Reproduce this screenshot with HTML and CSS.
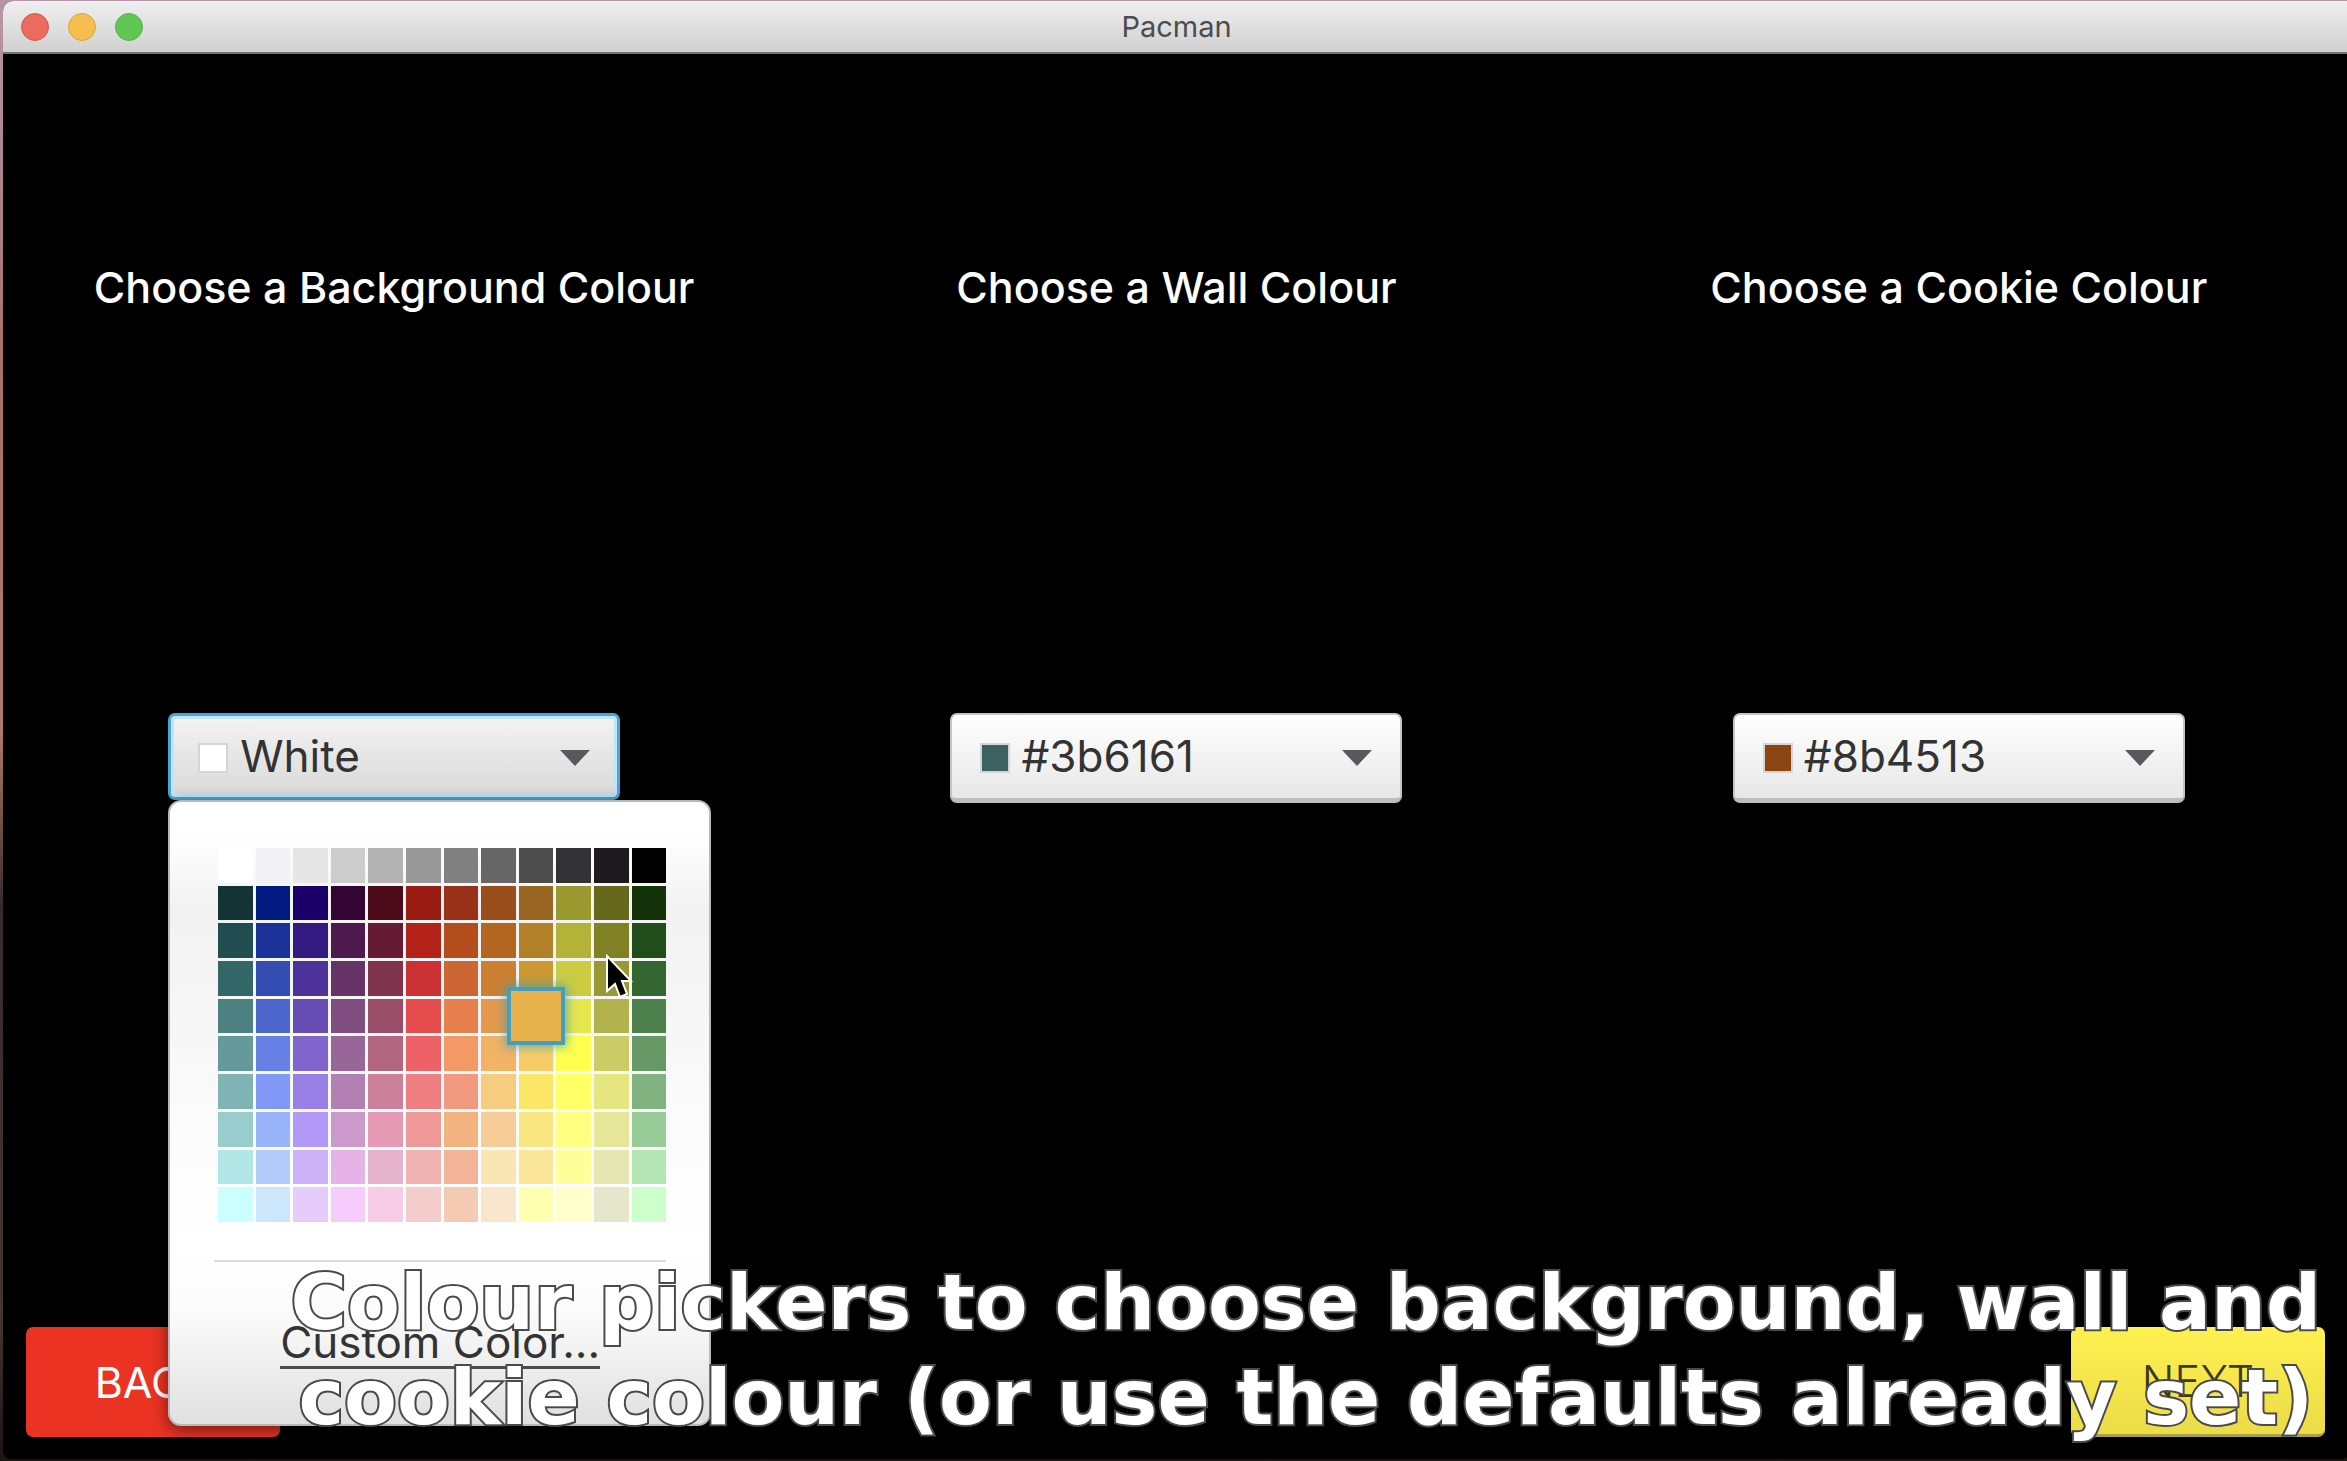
FILE: index.html
```html
<!DOCTYPE html>
<html lang="en">
<head>
<meta charset="utf-8">
<title>Pacman</title>
<link rel="stylesheet" href="styles.css">
</head>
<body>
<div class="window">
  <header class="titlebar">
    <div class="lights">
      <button class="light light-close" aria-label="Close"></button>
      <button class="light light-min" aria-label="Minimise"></button>
      <button class="light light-zoom" aria-label="Zoom"></button>
    </div>
    <h1 class="title">Pacman</h1>
  </header>
  <main class="board">
    <label class="heading" for="background">Choose a Background Colour</label>
    <label class="heading" for="wall">Choose a Wall Colour</label>
    <label class="heading" for="cookie">Choose a Cookie Colour</label>

    <div class="picker picker-open">
      <select id="background"><option>White</option></select>
      <span class="chip chip-white"></span>
      <svg class="arrow" viewBox="0 0 30 16"><path d="M0 0H30L15 16Z"/></svg>
      <div class="popup">
        <div class="palette" id="palette"></div>
        <hr class="rule">
        <a class="custom" href="#">Custom Color...</a>
        <svg class="cursor" viewBox="0 0 28 46"><path d="M2 2V37L10 30L15 43L22 40L17 27H26Z"/></svg>
      </div>
    </div>
    <div class="picker">
      <select id="wall"><option>#3b6161</option></select>
      <span class="chip chip-wall"></span>
      <svg class="arrow" viewBox="0 0 30 16"><path d="M0 0H30L15 16Z"/></svg>
    </div>
    <div class="picker">
      <select id="cookie"><option>#8b4513</option></select>
      <span class="chip chip-cookie"></span>
      <svg class="arrow" viewBox="0 0 30 16"><path d="M0 0H30L15 16Z"/></svg>
    </div>

    <nav class="actions">
      <button class="action back">BACK</button>
      <button class="action next">NEXT</button>
    </nav>
  </main>
</div>
<p class="caption">Colour pickers to choose background, wall and<br>cookie colour (or use the defaults already set)</p>
<script src="palette.js"></script>
</body>
</html>
```
FILE: styles.css
```css
* { box-sizing: border-box; }

body {
  margin: 0;
  min-height: 100vh;
  padding: 1px 0 2px 3px;
  background: linear-gradient(#b795a8, #a8706c 25%, #b07a68 50%, #3a2a2c 62%, #4a3430 90%, #1c1512);
  font-family: Inter, "Liberation Sans", sans-serif;
  overflow: hidden;
}

.window {
  display: flex;
  flex-direction: column;
  min-height: calc(100vh - 3px);
  margin-right: -3px;
  border-radius: 10px 10px 8px 8px;
  background: #000;
}

.titlebar {
  display: grid;
  grid-template-columns: 1fr auto 1fr;
  align-items: center;
  height: 53px;
  padding: 0 18px;
  border-bottom: 2px solid #6f7272;
  border-radius: 10px 0 0 0;
  background: linear-gradient(#f0eff0, #d0d0d0);
}

.lights { display: flex; gap: 19px; }

.light {
  width: 28px;
  height: 28px;
  padding: 0;
  border: 1px solid;
  border-radius: 50%;
}
.light-close { background: #ed6a5f; border-color: #d9574d; }
.light-min { background: #f5bf4f; border-color: #dba53c; }
.light-zoom { background: #62c655; border-color: #54b048; }

.title {
  margin: 0;
  color: #4c4c4c;
  font-size: 29px;
  font-weight: 400;
}

.board {
  flex: 1;
  display: grid;
  grid-template-columns: repeat(3, 1fr);
  grid-template-rows: repeat(3, 1fr);
  place-items: center;
  padding-top: 3px;
}

.heading {
  padding-bottom: 8px;
  color: #fff;
  font-size: 43px;
  font-weight: 500;
}

.picker {
  position: relative;
  display: grid;
  grid-template-columns: 30px auto 30px;
  align-items: center;
  width: 452px;
  height: 90px;
  padding: 0 30px;
}

.picker select {
  position: absolute;
  inset: 0;
  width: 100%;
  padding: 0 0 0 69px;
  border: 2px solid #c4c4c4;
  border-bottom: 5px solid #bdbdbd;
  border-radius: 7px;
  appearance: none;
  background: linear-gradient(#fff, #e7e7e7);
  color: #333;
  font: 44px Inter, "Liberation Sans", sans-serif;
}

.picker-open select {
  bottom: 3px;
  border: 3px solid #4ba6d3;
  background: linear-gradient(#f3f3f4, #d9d9d9);
  box-shadow: inset 0 0 0 3px #bfe6f8;
}

.chip {
  z-index: 1;
  width: 30px;
  height: 30px;
  border: 2px solid #d5d5d5;
}
.chip-white { background: #fff; }
.chip-wall { background: #3b6161; }
.chip-cookie { background: #8b4513; }

.arrow {
  z-index: 1;
  grid-column: 3;
  width: 30px;
  height: 16px;
  fill: #59595b;
}

.popup {
  position: absolute;
  z-index: 2;
  top: 87px;
  left: 0;
  width: 543px;
  padding: 46px 43px 55px 44px;
  border: 2px solid #b9b9b9;
  border-radius: 13px;
  background: linear-gradient(#fff 5%, #f2f2f3 17%, #fdfdfd 60%, #fff 72%, #fbfbfb 82%, #e0e0e0);
  box-shadow: 0 4px 16px rgba(0, 0, 0, 0.5);
}

.palette {
  display: grid;
  grid-template-columns: repeat(12, 1fr);
  grid-template-rows: repeat(10, 1fr);
  gap: 3px;
  height: 374px;
  padding-left: 4px;
}

.swatch { padding: 0; border: 0; }

.swatch.hovered {
  z-index: 1;
  margin: -12px;
  border: 4px solid #479dbb;
  box-shadow: 0 0 10px 2px rgba(60, 160, 180, 0.7);
}

.rule {
  height: 2px;
  margin: 38px 0 56px;
  border: 0;
  background: #dadada;
}

.custom {
  display: block;
  width: fit-content;
  margin: 0 auto;
  border-bottom: 3px solid #4c4c4c;
  color: #333;
  font-size: 44px;
  line-height: 48px;
  text-decoration: none;
}

.cursor {
  position: absolute;
  z-index: 2;
  left: 435px;
  top: 152px;
  width: 28px;
  height: 46px;
  stroke: #fff;
  stroke-width: 2;
}

.actions {
  grid-column: 1 / -1;
  align-self: end;
  justify-self: stretch;
  display: flex;
  justify-content: space-between;
  padding: 0 25px 22px 23px;
}

.action {
  width: 254px;
  height: 110px;
  padding: 0;
  border: 0;
  border-radius: 7px;
  font: 43px Inter, "Liberation Sans", sans-serif;
}
.back { background: #ea3323; color: #fff; }
.next {
  background: linear-gradient(#fff051, #ebdc48);
  border-bottom: 3px solid #aaa24a;
  color: #3c3a1c;
  font-weight: 300;
}

.caption {
  position: absolute;
  right: 26px;
  bottom: 16px;
  z-index: 3;
  margin: 0;
  color: #fff;
  font: 700 77px/95px "DejaVu Sans", sans-serif;
  text-align: center;
  white-space: nowrap;
  -webkit-text-stroke: 4px #4a4a4a;
  paint-order: stroke fill;
}
```
FILE: palette.js
```js
const rows = [
  "ffffff f3f3f5 e6e6e6 cccccc b3b3b3 999999 808080 666666 4d4d4d 333335 1c1a1d 000000",
  "133335 001a80 1a0068 330533 4d0a1a 991d13 993118 994e1c 996522 99992f 66681c 14330a",
  "204e50 1b3399 331a80 4d1a4d 661a33 b3231a b34d1e b36622 b3802a b3b338 808025 204d1b",
  "336666 344db3 4d3399 663366 80334d cc3133 cc6633 cc8033 cc9933 cccc42 999933 336633",
  "4d8080 4d66cc 664db3 804d80 994d66 e64d4d e6804d e6994d e6b34d e6e64d b3b34d 4d804d",
  "669999 6680e6 8066cc 996699 b36680 ed6266 f29966 f2b366 f7cc66 ffff4d cccc66 669966",
  "80b3b3 8099f7 9980e6 b380b3 cc8099 ee7e80 f09980 f6cc80 fce666 ffff66 e6e680 80b380",
  "99cccc 99b3f9 b399f7 cc99cc e699b3 f09999 f3b380 f6cc99 fae680 ffff80 e6e699 99cc99",
  "b3e6e6 b3ccfb ccb3f9 e6b3e6 e6b3cc f2b3b3 f3b399 fae6b3 fbe699 ffff99 e6e6b3 b3e6b3",
  "ccffff cce6fc e6ccfb f5ccfc f6cce6 f5cccc f5ccb3 fae6cc ffffb0 ffffcc e6e6cc ccffcc"
];
const palette = document.getElementById("palette");
rows.forEach((row, r) => row.split(" ").forEach((hex, c) => {
  const swatch = document.createElement("button");
  swatch.className = r === 4 && c === 8 ? "swatch hovered" : "swatch";
  swatch.style.backgroundColor = "#" + hex;
  swatch.setAttribute("aria-label", "#" + hex);
  palette.append(swatch);
}));
```
